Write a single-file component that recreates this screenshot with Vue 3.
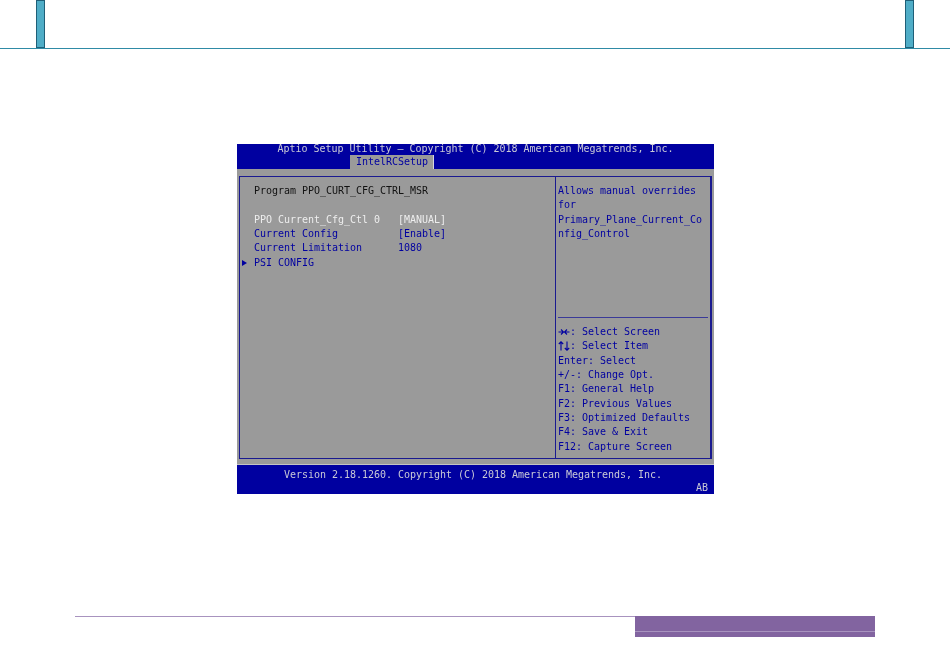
<script setup>
const settings = [
  { label: 'PPO Current_Cfg_Ctl 0', value: '[MANUAL]', active: true },
  { label: 'Current Config', value: '[Enable]' },
  { label: 'Current Limitation', value: '1080', plain: true },
]
const help = ['Allows manual overrides', 'for', 'Primary_Plane_Current_Co', 'nfig_Control']
const keys = [
  'Enter: Select', '+/-: Change Opt.',
  'F1: General Help', 'F2: Previous Values', 'F3: Optimized Defaults',
  'F4: Save & Exit', 'F12: Capture Screen',
]
</script>

<template>
  <div class="page">
    <header class="top">
      <span class="tab-mark"></span>
      <span class="tab-mark"></span>
    </header>

    <main class="content">
      <section class="bios">
        <div class="bios-head">
          <div class="title">Aptio Setup Utility – Copyright (C) 2018 American Megatrends, Inc.</div>
          <div class="tabs"><span class="tab">IntelRCSetup</span></div>
        </div>
        <div class="bios-body">
          <div class="frame">
            <div class="left">
              <div class="row heading">Program PPO_CURT_CFG_CTRL_MSR</div>
              <div class="row"></div>
              <div v-for="s in settings" :key="s.label" class="row setting" :class="{ active: s.active }">
                <span class="label">{{ s.label }}</span>
                <span>{{ s.value }}</span>
              </div>
              <div class="row submenu"><span class="arrow"></span>PSI CONFIG</div>
            </div>
            <div class="right">
              <div class="help">
                <div v-for="h in help" :key="h" class="row">{{ h }}</div>
              </div>
              <div class="keys">
                <div class="row key">
                  <svg class="key-icon" width="12" height="10" viewBox="0 0 12 10" fill="none" stroke="#0000a0" stroke-width="1.1">
                    <path d="M0.5 5H5.5M3 2.5L5.5 5L3 7.5M11.5 5H6.5M9 2.5L6.5 5L9 7.5" />
                  </svg>: Select Screen
                </div>
                <div class="row key">
                  <svg class="key-icon" width="12" height="10" viewBox="0 0 12 10" fill="none" stroke="#0000a0" stroke-width="1.1">
                    <path d="M3 9.5V0.8M0.8 3L3 0.8L5.2 3M9 0.5V9.2M6.8 7L9 9.2L11.2 7" />
                  </svg>: Select Item
                </div>
                <div v-for="k in keys" :key="k" class="row">{{ k }}</div>
              </div>
            </div>
          </div>
        </div>
        <div class="bios-foot">
          <div class="version">Version 2.18.1260. Copyright (C) 2018 American Megatrends, Inc.</div>
          <div class="code">AB</div>
        </div>
      </section>
    </main>

    <footer class="bottom">
      <span class="rule"></span>
      <span class="block"></span>
    </footer>
  </div>
</template>

<style>
html, body { margin: 0; background: #fff; }
</style>

<style scoped>
.page {
  width: 950px;
  height: 672px;
  display: flex;
  flex-direction: column;
  overflow: hidden;
  background: #fff;
}
.top {
  height: 48px;
  flex: none;
  display: flex;
  justify-content: space-between;
  padding: 0 36px;
  border-bottom: 1px solid #2f8ba6;
}
.tab-mark {
  width: 9px;
  height: 48px;
  box-sizing: border-box;
  background: #4fadc7;
  border: 1px solid #1f5f78;
}
.content {
  flex: 1;
  padding: 95px 0 0 237px;
}
.bios {
  width: 477px;
  height: 349px;
  display: flex;
  flex-direction: column;
  font: 10px/14.33px "DejaVu Sans Mono", "Liberation Mono", monospace;
  letter-spacing: -0.02px;
  white-space: pre;
  background: #9a9a9a;
  filter: blur(0.3px);
}
.bios-head {
  height: 25px;
  background: #0000a0;
  color: #c9c9d6;
}
.title {
  height: 11px;
  line-height: 9px;
  text-align: center;
}
.tabs {
  padding-left: 113px;
}
.tab {
  display: block;
  box-sizing: border-box;
  width: 84px;
  height: 14px;
  line-height: 14px;
  padding-left: 6px;
  background: #9a9a9a;
  color: #0000a0;
  border-right: 1px solid #d4d4e0;
}
.bios-body {
  height: 296px;
  box-sizing: border-box;
  padding: 7px 2px 6px;
  border-bottom: 1px solid #c4c4c4;
}
.frame {
  height: 283px;
  box-sizing: border-box;
  display: flex;
  border: 1px solid #1a1a90;
  border-width: 1px 2px 1px 1px;
}
.left {
  width: 316px;
  flex: none;
  box-sizing: border-box;
  padding: 7px 0 0 14px;
  border-right: 1px solid #1a1a90;
  color: #0000a0;
}
.right {
  flex: 1;
  display: flex;
  flex-direction: column;
  padding: 7px 2px 0;
  color: #0000a0;
}
.row {
  height: 14.33px;
}
.key {
  display: flex;
  align-items: center;
}
.key-icon {
  flex: none;
  margin-top: -1px;
}
.heading {
  color: #111;
}
.setting {
  display: flex;
}
.label {
  width: 144px;
}
.setting.active {
  color: #eee;
}
.submenu {
  position: relative;
}
.arrow {
  position: absolute;
  left: -12px;
  top: 4px;
  width: 0;
  height: 0;
  border-left: 5px solid #0000a0;
  border-top: 3px solid transparent;
  border-bottom: 3px solid transparent;
}
.help {
  height: 133px;
  border-bottom: 1px solid #3a3a98;
}
.keys {
  padding-top: 7px;
}
.bios-foot {
  flex: 1;
  background: #0000a0;
  color: #c9c9d6;
}
.version {
  text-align: center;
  padding-top: 3px;
  padding-right: 5px;
}
.code {
  text-align: right;
  padding-right: 6px;
  line-height: 12px;
}
.bottom {
  height: 56px;
  flex: none;
  display: flex;
  align-items: flex-start;
  padding-left: 75px;
}
.rule {
  width: 560px;
  height: 1px;
  background: #a893bf;
}
.block {
  width: 240px;
  height: 21px;
  box-sizing: border-box;
  background: linear-gradient(#8264a0 15px, #a893bf 15px, #a893bf 16px, #8264a0 16px);
}
</style>
